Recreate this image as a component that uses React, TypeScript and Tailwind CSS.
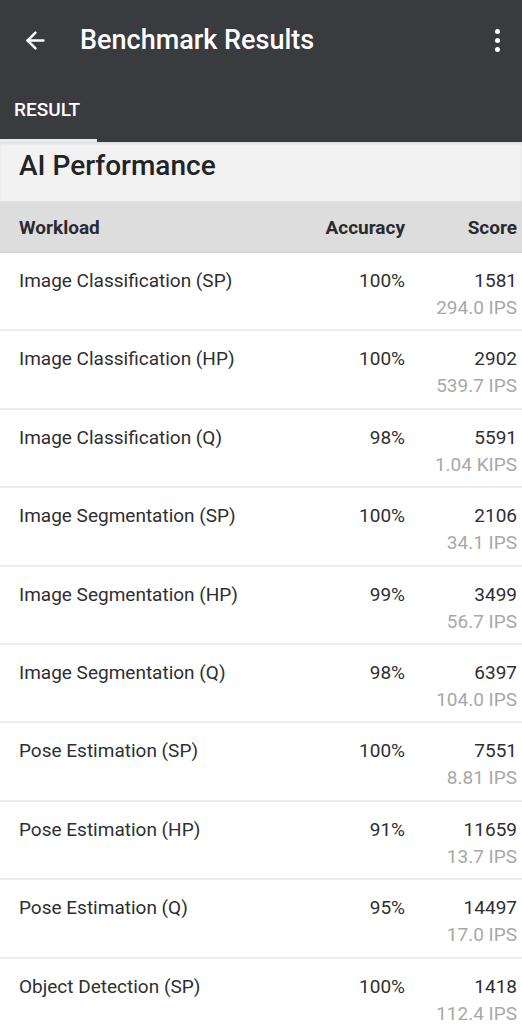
import { ArrowLeft } from "lucide-react";

type Row = {
  name: string;
  accuracy: string;
  score: string;
  ips: string;
};

const rows: Row[] = [
  { name: "Image Classification (SP)", accuracy: "100%", score: "1581", ips: "294.0 IPS" },
  { name: "Image Classification (HP)", accuracy: "100%", score: "2902", ips: "539.7 IPS" },
  { name: "Image Classification (Q)", accuracy: "98%", score: "5591", ips: "1.04 KIPS" },
  { name: "Image Segmentation (SP)", accuracy: "100%", score: "2106", ips: "34.1 IPS" },
  { name: "Image Segmentation (HP)", accuracy: "99%", score: "3499", ips: "56.7 IPS" },
  { name: "Image Segmentation (Q)", accuracy: "98%", score: "6397", ips: "104.0 IPS" },
  { name: "Pose Estimation (SP)", accuracy: "100%", score: "7551", ips: "8.81 IPS" },
  { name: "Pose Estimation (HP)", accuracy: "91%", score: "11659", ips: "13.7 IPS" },
  { name: "Pose Estimation (Q)", accuracy: "95%", score: "14497", ips: "17.0 IPS" },
  { name: "Object Detection (SP)", accuracy: "100%", score: "1418", ips: "112.4 IPS" },
];

const App = () => {
  return (
    <div className="w-[522px] h-[1024px] overflow-hidden bg-white font-['Roboto',sans-serif]">
      {/* app bar */}
      <div className="bg-[#3a3b3e] text-white">
        <div className="h-[80px] flex items-center">
          <div className="w-[80px] flex items-center pl-[22px]">
            <ArrowLeft className="w-[27px] h-[27px]" strokeWidth={2.2} />
          </div>
          <h1 className="flex-1 text-[27px] font-medium">Benchmark Results</h1>
          <div className="w-[52px] flex flex-col items-center gap-[4px] pl-[2px]">
            <span className="w-[5px] h-[5px] rounded-full bg-white" />
            <span className="w-[5px] h-[5px] rounded-full bg-white" />
            <span className="w-[5px] h-[5px] rounded-full bg-white" />
          </div>
        </div>
        <div className="h-[62px] flex flex-col">
          <div className="w-[97px] flex-1 flex items-center pl-[14px] text-[19px] font-medium pt-[2px]">
            RESULT
          </div>
          <div className="w-[97px] h-[3px] bg-[#e8ebee]" />
        </div>
      </div>

      {/* section title */}
      <div className="h-[60px] bg-[#f2f2f2] flex items-center px-[19px] border-b border-[#e2e2e2] shadow-[inset_0_2px_3px_rgba(0,0,0,0.08)]">
        <h2 className="text-[28px] font-medium text-[#222326] pb-[12px]">AI Performance</h2>
      </div>

      {/* table header */}
      <div className="h-[51px] bg-[#dddddd] flex items-center px-[19px] pr-[5px] pt-[3px] text-[19px] font-bold text-[#2a2b2e] border-b border-[#cfcfcf]">
        <span className="flex-1">Workload</span>
        <span className="w-[120px] text-right">Accuracy</span>
        <span className="w-[112px] text-right">Score</span>
      </div>

      {/* rows */}
      {rows.map((row) => (
        <div
          key={row.name}
          className="h-[78.4px] flex px-[19px] pr-[5px] pt-[14px] border-b-2 border-[#ececec] text-[19px] leading-[27px] text-[#2e2f32]"
        >
          <span className="flex-1">{row.name}</span>
          <span className="w-[120px] text-right">{row.accuracy}</span>
          <div className="w-[112px] flex flex-col items-end">
            <span>{row.score}</span>
            <span className="text-[#a8a8a8]">{row.ips}</span>
          </div>
        </div>
      ))}
    </div>
  );
};

export default App;
